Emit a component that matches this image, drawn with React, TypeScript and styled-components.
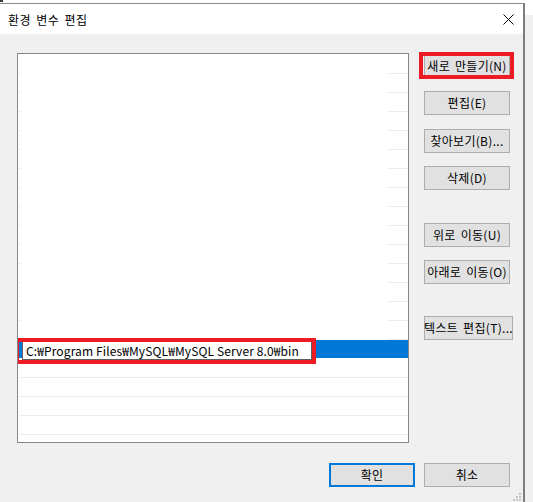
import React from 'react';
import styled, { createGlobalStyle, css } from 'styled-components';

const GlobalStyle = createGlobalStyle`
  html, body { margin: 0; padding: 0; background: #ffffff; }
  body {
    font-family: "Noto Sans CJK KR", "Noto Sans", sans-serif;
    font-size: 12px;
    color: #000000;
  }
  * { box-sizing: border-box; }
`;

const Page = styled.div`
  width: 533px;
  height: 502px;
  overflow: hidden;
  display: flex;
  flex-direction: column;
  background: #ffffff;
`;

const TopStrip = styled.div`
  height: 3px;
  flex: none;
  display: flex;
  align-items: flex-start;
`;

const Fragment = styled.span`
  width: 3px;
  height: 2px;
  background: #3a3a3a;
`;

const Desk = styled.div`
  flex: 1;
  display: flex;
  min-height: 0;
`;

const Window = styled.div`
  width: 525px;
  flex: none;
  border-top: 1px solid #8c8c8c;
  border-right: 2px solid #7d7d7d;
  display: flex;
  flex-direction: column;
`;

const RightStrip = styled.div`
  flex: 1;
  background: linear-gradient(#ffffff 0 12px, #f0f0f0 12px);
`;

const TitleBar = styled.div`
  height: 30px;
  flex: none;
  background: #ffffff;
  display: flex;
  align-items: center;
  justify-content: space-between;
  padding: 0 9px 0 8px;
`;

const Title = styled.span`
  font-size: 12px;
  line-height: 16px;
  margin-top: 1px;
  letter-spacing: 0.5px;
  word-spacing: 2px;
`;

const Body = styled.div`
  flex: 1;
  position: relative;
  background: #f0f0f0;
  padding: 19px 13px 0 17px;
  display: flex;
  flex-direction: column;
`;

const Main = styled.div`
  display: flex;
  align-items: flex-start;
`;

const ListBox = styled.div`
  width: 392px;
  height: 390px;
  flex: none;
  background: #ffffff;
  border: 1px solid #828790;
  padding-top: 1px;
  overflow: hidden;
  display: flex;
  flex-direction: column;
`;

type RowKind = 'partial' | 'full' | 'selected';

const Row = styled.div<{ $kind: RowKind }>`
  height: 19px;
  flex: none;
  display: flex;
  align-items: flex-start;
  ${({ $kind }) =>
    $kind === 'partial' &&
    css`
      background:
        linear-gradient(#ececec, #ececec) right bottom / 20px 1px no-repeat,
        linear-gradient(#e4e9ef, #e4e9ef) 1px 100% / 2px 1px no-repeat;
    `}
  ${({ $kind }) =>
    $kind === 'full' &&
    css`
      background: linear-gradient(#ededed, #ededed) 1px 100% / calc(100% - 1px) 1px no-repeat;
    `}
  ${({ $kind }) =>
    $kind === 'selected' &&
    css`
      background: linear-gradient(#0078d7, #0078d7) 1px 0 / calc(100% - 1px) 18px no-repeat;
    `}
`;

const EditBox = styled.div`
  position: relative;
  margin: 1px 0 0 4px;
  width: 290px;
  height: 19px;
  background: #ffffff;
  border: 1px solid #5f5f5f;
  padding-left: 3px;
  font-size: 12px;
  line-height: 17px;
  letter-spacing: 0.12px;
  white-space: nowrap;
`;

const Highlight = styled.span<{ $t: number; $r: number; $b: number; $l: number }>`
  position: absolute;
  top: ${({ $t }) => $t}px;
  right: ${({ $r }) => $r}px;
  bottom: ${({ $b }) => $b}px;
  left: ${({ $l }) => $l}px;
  border: 4px solid #ed1c24;
  pointer-events: none;
`;

const ButtonColumn = styled.div`
  margin-left: 15px;
  padding-top: 1px;
  display: flex;
  flex-direction: column;
  align-items: flex-start;
`;

const ButtonSlot = styled.div<{ $gap: number }>`
  position: relative;
  margin-top: ${({ $gap }) => $gap}px;
`;

const Button = styled.button<{ $width?: number; $default?: boolean }>`
  width: ${({ $width }) => $width ?? 86}px;
  height: 24px;
  margin: 0;
  padding: 0;
  background: #e1e1e1;
  border: ${({ $default }) => ($default ? '2px solid #0078d7' : '1px solid #adadad')};
  border-radius: 0;
  font-family: "Noto Sans CJK KR", "Noto Sans", sans-serif;
  font-size: 12px;
  line-height: 16px;
  letter-spacing: 0.3px;
  word-spacing: 2px;
  color: #000000;
  display: flex;
  align-items: center;
  justify-content: center;
  white-space: nowrap;
`;

const Footer = styled.div`
  margin-top: 20px;
  display: flex;
  justify-content: flex-end;
  gap: 9px;
`;

const Grip = styled.svg`
  position: absolute;
  right: 2px;
  bottom: 1px;
`;

const CloseIcon = () => (
  <svg width="11" height="11" viewBox="0 0 11 11">
    <path d="M0.5 0.5 L10.5 10.5 M10.5 0.5 L0.5 10.5" stroke="#000" strokeWidth="1" fill="none" />
  </svg>
);

const rowKinds: RowKind[] = Array.from({ length: 21 }, (_, i) =>
  i < 15 ? 'partial' : i === 15 ? 'selected' : 'full'
);

const sideButtons: { label: string; gap: number; width?: number; mark?: boolean }[] = [
  { label: '새로 만들기(N)', gap: 0, mark: true },
  { label: '편집(E)', gap: 13 },
  { label: '찾아보기(B)...', gap: 14 },
  { label: '삭제(D)', gap: 13 },
  { label: '위로 이동(U)', gap: 33 },
  { label: '아래로 이동(O)', gap: 13 },
  { label: '텍스트 편집(T)...', gap: 32, width: 89 },
];

export default function App() {
  return (
    <>
      <GlobalStyle />
      <Page>
        <TopStrip>
          <Fragment />
        </TopStrip>
        <Desk>
          <Window>
            <TitleBar>
              <Title>환경 변수 편집</Title>
              <CloseIcon />
            </TitleBar>
            <Body>
              <Main>
                <ListBox>
                  {rowKinds.map((kind, i) => (
                    <Row key={i} $kind={kind}>
                      {kind === 'selected' && (
                        <EditBox>
                          C:₩Program Files₩MySQL₩MySQL Server 8.0₩bin
                          <Highlight $t={-4} $r={-5} $b={-5} $l={-8} />
                        </EditBox>
                      )}
                    </Row>
                  ))}
                </ListBox>
                <ButtonColumn>
                  {sideButtons.map((b) => (
                    <ButtonSlot key={b.label} $gap={b.gap}>
                      <Button $width={b.width}>{b.label}</Button>
                      {b.mark && <Highlight $t={-2} $r={-4} $b={-1} $l={-5} />}
                    </ButtonSlot>
                  ))}
                </ButtonColumn>
              </Main>
              <Footer>
                <Button $default>확인</Button>
                <Button>취소</Button>
              </Footer>
              <Grip width="8" height="8" viewBox="0 0 8 8">
                {[
                  [6, 0],
                  [3, 3],
                  [6, 3],
                  [0, 6],
                  [3, 6],
                  [6, 6],
                ].map(([x, y]) => (
                  <rect key={`${x}-${y}`} x={x} y={y} width="2" height="2" fill="#c4c4c4" />
                ))}
              </Grip>
            </Body>
          </Window>
          <RightStrip />
        </Desk>
      </Page>
    </>
  );
}
